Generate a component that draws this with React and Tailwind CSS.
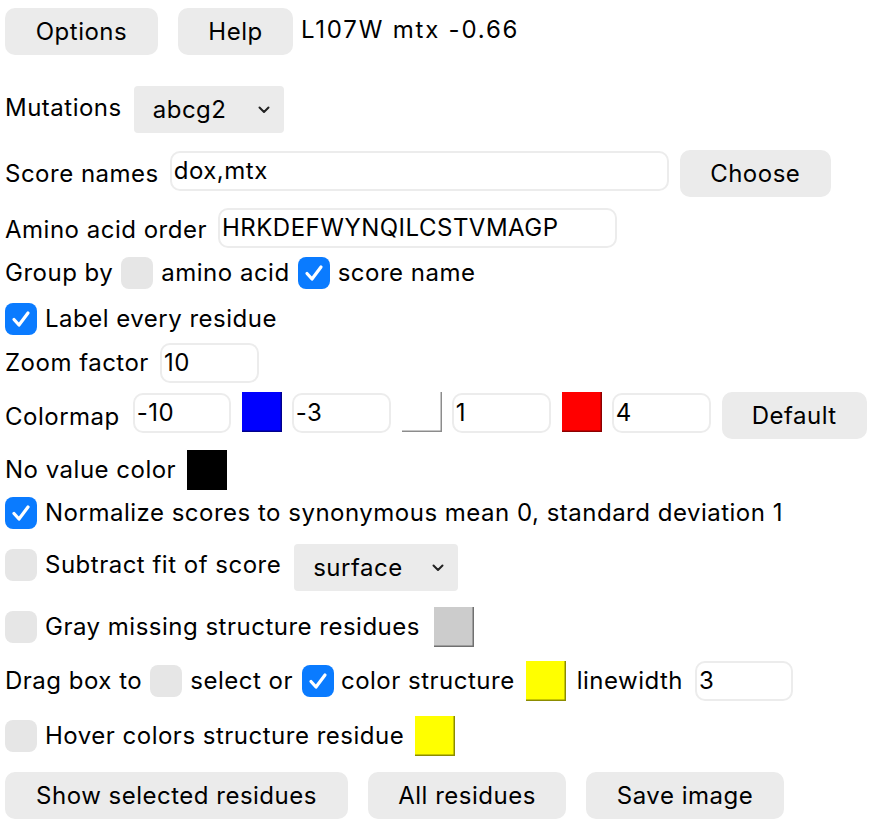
import React from "react";

const F = { fontFamily: "Inter, 'Liberation Sans', sans-serif" };

function Btn({ w, children }) {
  return (
    <div
      className={`flex items-center justify-center h-[47px] rounded-[10px] bg-[#ebebeb] text-black ${w}`}
    >
      {children}
    </div>
  );
}

function Input({ w, value }) {
  return (
    <div
      className={`flex items-center h-[40px] rounded-[10px] border-2 border-[#ececec] bg-white pl-[2px] ${w}`}
    >
      {value}
    </div>
  );
}

function Sel({ w, value }) {
  return (
    <div
      className={`flex items-center justify-between h-[47px] rounded-[4px] bg-[#ebebeb] pl-[19px] pr-[14px] ${w}`}
    >
      <span>{value}</span>
      <svg width="12" height="8" viewBox="0 0 12 8">
        <path d="M1.5 1.5 L6 6 L10.5 1.5" fill="none" stroke="#222" strokeWidth="2" strokeLinecap="round" strokeLinejoin="round" />
      </svg>
    </div>
  );
}

function Check({ on }) {
  if (on)
    return (
      <div className="flex items-center justify-center w-[32px] h-[32px] rounded-[8px] bg-[#0a7bff] shrink-0">
        <svg width="20" height="18" viewBox="0 0 20 18">
          <path d="M3 9.5 L8 15 L17 3" fill="none" stroke="white" strokeWidth="3.2" strokeLinecap="round" strokeLinejoin="round" />
        </svg>
      </div>
    );
  return <div className="w-[32px] h-[32px] rounded-[8px] bg-[#e6e6e6] shrink-0" />;
}

function Swatch({ color }) {
  return (
    <div
      className="w-[40px] h-[40px] shrink-0 shadow-[inset_-1.5px_-1.5px_0_rgba(0,0,0,0.45)]"
      style={{ backgroundColor: color }}
    />
  );
}

export default function App() {
  return (
    <div className="bg-white w-[876px] h-[834px] overflow-hidden text-[24px] tracking-[0.5px] text-black pl-[5px]" style={F}>
      <div className="flex flex-col">
        {/* row 1 */}
        <div className="flex items-center h-[47px] mt-[8px]">
          <Btn w="w-[153px]">Options</Btn>
          <div className="w-[20px]" />
          <Btn w="w-[115px]">Help</Btn>
          <span className="ml-[8px] -mt-[3px] tracking-[1.8px]">L107W mtx -0.66</span>
        </div>
        {/* row 2 */}
        <div className="flex items-center h-[47px] mt-[31px] gap-[12px]">
          <span className="-mt-[3px]">Mutations</span>
          <Sel w="w-[150px]" value="abcg2" />
        </div>
        {/* row 3 */}
        <div className="flex items-center h-[47px] mt-[17px]">
          <span>Score names</span>
          <div className="ml-[11px] -mt-[5px]">
            <Input w="w-[499px]" value="dox,mtx" />
          </div>
          <div className="ml-[11px]">
            <Btn w="w-[151px]">Choose</Btn>
          </div>
        </div>
        {/* row 4 */}
        <div className="flex items-center h-[40px] mt-[11px] gap-[11px]">
          <span className="mt-[3px]">Amino acid order</span>
          <Input w="w-[399px]" value="HRKDEFWYNQILCSTVMAGP" />
        </div>
        {/* row 5 */}
        <div className="flex items-center h-[32px] mt-[9px] gap-[8px]">
          <span>Group by</span>
          <Check on={false} />
          <span>amino acid</span>
          <Check on={true} />
          <span>score name</span>
        </div>
        {/* row 6 */}
        <div className="flex items-center h-[32px] mt-[14px] gap-[8px]">
          <Check on={true} />
          <span>Label every residue</span>
        </div>
        {/* row 7 */}
        <div className="flex items-center h-[40px] mt-[8px] gap-[11px]">
          <span>Zoom factor</span>
          <Input w="w-[99px]" value="10" />
        </div>
        {/* row 8 */}
        <div className="flex items-start h-[47px] mt-[9px]">
          <span className="mt-[7px] mr-[13px]">Colormap</span>
          <div className="mt-[1px]"><Input w="w-[98px]" value="-10" /></div>
          <div className="ml-[11px]"><Swatch color="#0000ff" /></div>
          <div className="ml-[10px] mt-[1px]"><Input w="w-[99px]" value="-3" /></div>
          <div className="ml-[11px]"><Swatch color="#ffffff" /></div>
          <div className="ml-[10px] mt-[1px]"><Input w="w-[99px]" value="1" /></div>
          <div className="ml-[11px]"><Swatch color="#ff0000" /></div>
          <div className="ml-[10px] mt-[1px]"><Input w="w-[99px]" value="4" /></div>
          <div className="ml-[11px]"><Btn w="w-[145px]">Default</Btn></div>
        </div>
        {/* row 9 */}
        <div className="flex items-center h-[40px] mt-[11px] gap-[11px]">
          <span>No value color</span>
          <Swatch color="#000000" />
        </div>
        {/* row 10 */}
        <div className="flex items-center h-[32px] mt-[7px] gap-[8px]">
          <Check on={true} />
          <span>Normalize scores to synonymous mean 0, standard deviation 1</span>
        </div>
        {/* row 11 */}
        <div className="flex items-center h-[47px] mt-[15px]">
          <div className="-mt-[6px]"><Check on={false} /></div>
          <span className="ml-[8px] -mt-[5px]">Subtract fit of score</span>
          <div className="ml-[13px]"><Sel w="w-[164px]" value="surface" /></div>
        </div>
        {/* row 12 */}
        <div className="flex items-center h-[40px] mt-[16px]">
          <Check on={false} />
          <span className="ml-[8px]">Gray missing structure residues</span>
          <div className="ml-[14px]"><Swatch color="#cccccc" /></div>
        </div>
        {/* row 13 */}
        <div className="flex items-center h-[40px] mt-[14px]">
          <span>Drag box to</span>
          <div className="ml-[8px]"><Check on={false} /></div>
          <span className="ml-[8px]">select or</span>
          <div className="ml-[9px]"><Check on={true} /></div>
          <span className="ml-[7px]">color structure</span>
          <div className="ml-[11px]"><Swatch color="#ffff00" /></div>
          <span className="ml-[11px]">linewidth</span>
          <div className="ml-[12px]"><Input w="w-[98px]" value="3" /></div>
        </div>
        {/* row 14 */}
        <div className="flex items-center h-[40px] mt-[15px]">
          <Check on={false} />
          <span className="ml-[8px]">Hover colors structure residue</span>
          <div className="ml-[11px]"><Swatch color="#ffff00" /></div>
        </div>
        {/* row 15 */}
        <div className="flex items-center h-[47px] mt-[16px]">
          <Btn w="w-[343px]">Show selected residues</Btn>
          <div className="ml-[20px]"><Btn w="w-[198px]">All residues</Btn></div>
          <div className="ml-[20px]"><Btn w="w-[198px]">Save image</Btn></div>
        </div>
      </div>
    </div>
  );
}
